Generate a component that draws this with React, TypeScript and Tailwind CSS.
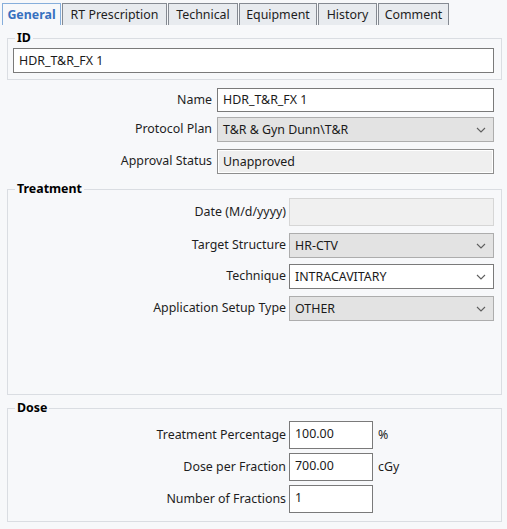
import React from "react";

const font = { fontFamily: '"Noto Sans", "Open Sans", sans-serif' };

function Chevron() {
  return (
    <svg width="10" height="6" viewBox="0 0 10 6" className="shrink-0">
      <path d="M1 1 L5 5 L9 1" fill="none" stroke="#5f5f5f" strokeWidth="1.1" />
    </svg>
  );
}

type BoxKind = "text" | "combo" | "comboWhite" | "readonly" | "date";

function Box({ kind, value, className }: { kind: BoxKind; value?: string; className: string }) {
  const base = "flex items-center pl-[5px] pr-[7px] text-[12.4px] text-[#1a1a1a] box-border ";
  const styles: Record<BoxKind, string> = {
    text: "bg-white border border-[#7a7a7a]",
    comboWhite: "bg-white border border-[#7a7a7a]",
    combo: "bg-[#e3e3e3] border border-[#adadad]",
    readonly: "bg-[#efefef] border border-[#8e8e8e] shadow-[inset_0_0_0_1px_#ffffff]",
    date: "bg-[#f0f0f0] border border-[#d6d6d6]",
  };
  return (
    <div className={base + styles[kind] + " " + className}>
      <span className="flex-1 whitespace-nowrap leading-[16px]">{value}</span>
      {(kind === "combo" || kind === "comboWhite") && <Chevron />}
    </div>
  );
}

function Tab({ label, selected, w }: { label: string; selected?: boolean; w: string }) {
  return (
    <div
      className={
        "h-[22px] flex items-center justify-center pt-[2px] text-[12.4px] border border-b-0 mr-[1px] whitespace-nowrap " +
        w +
        " " +
        (selected
          ? "bg-[#f7f8fa] border-[#86aedb] text-[#3771c0] font-bold"
          : "bg-[#e8ebef] border-[#858a92] text-[#1e1e1e]")
      }
    >
      {label}
    </div>
  );
}

export default function App() {
  return (
    <div className="w-[507px] h-[529px] bg-[#f7f8fa] overflow-hidden text-[#1e1e1e]" style={font}>
      {/* Tabs */}
      <div className="flex pt-[3px] pl-[2px] h-[25px]">
        <Tab label="General" selected w="w-[59px]" />
        <Tab label="RT Prescription" w="w-[105px]" />
        <Tab label="Technical" w="w-[70px]" />
        <Tab label="Equipment" w="w-[78px]" />
        <Tab label="History" w="w-[59px]" />
        <Tab label="Comment" w="w-[71px]" />
      </div>

      {/* ID group */}
      <fieldset className="ml-[7px] w-[495px] mt-[5px] border border-[#dadde2] pt-[2px] pb-[6px]">
        <legend className="ml-[7px] px-[2px] text-[12.4px] font-bold leading-[16px] text-black">ID</legend>
        <Box kind="text" value="HDR_T&R_FX 1" className="ml-[5px] w-[481px] h-[25px]" />
      </fieldset>

      {/* General rows */}
      <div className="flex items-center mt-[8px] h-[24px]">
        <div className="w-[213px] text-right text-[12.4px] pr-[1px] whitespace-nowrap">Name</div>
        <Box kind="text" value="HDR_T&R_FX 1" className="ml-[4px] w-[277px] h-[24px]" />
      </div>
      <div className="flex items-center mt-[5px] h-[25px]">
        <div className="w-[213px] text-right text-[12.4px] pr-[1px] whitespace-nowrap">Protocol Plan</div>
        <Box kind="combo" value="T&R & Gyn Dunn\T&R" className="ml-[4px] w-[277px] h-[25px]" />
      </div>
      <div className="flex items-center mt-[7px] h-[25px]">
        <div className="w-[213px] text-right text-[12.4px] pr-[1px] whitespace-nowrap">Approval Status</div>
        <Box kind="readonly" value="Unapproved" className="ml-[4px] w-[277px] h-[25px]" />
      </div>

      {/* Treatment group */}
      <fieldset className="ml-[7px] w-[495px] h-[214px] mt-[7px] border border-[#dadde2] pt-[1px]">
        <legend className="ml-[7px] px-[2px] text-[12.4px] font-bold leading-[16px] text-black">Treatment</legend>
        <div className="flex items-center h-[28px]">
          <div className="w-[278px] text-right text-[12.4px] whitespace-nowrap">Date (M/d/yyyy)</div>
          <Box kind="date" className="ml-[3px] w-[205px] h-[28px]" />
        </div>
        <div className="flex items-center mt-[7px] h-[25px]">
          <div className="w-[278px] text-right text-[12.4px] whitespace-nowrap">Target Structure</div>
          <Box kind="combo" value="HR-CTV" className="ml-[3px] w-[205px] h-[25px]" />
        </div>
        <div className="flex items-center mt-[6px] h-[25px]">
          <div className="w-[278px] text-right text-[12.4px] whitespace-nowrap">Technique</div>
          <Box kind="comboWhite" value="INTRACAVITARY" className="ml-[3px] w-[205px] h-[25px]" />
        </div>
        <div className="flex items-center mt-[7px] h-[25px]">
          <div className="w-[278px] text-right text-[12.4px] whitespace-nowrap">Application Setup Type</div>
          <Box kind="combo" value="OTHER" className="ml-[3px] w-[205px] h-[25px]" />
        </div>
      </fieldset>

      {/* Dose group */}
      <fieldset className="ml-[7px] w-[495px] mt-[5px] border border-[#dadde2] pt-[5px] pb-[8px]">
        <legend className="ml-[7px] px-[2px] text-[12.4px] font-bold leading-[16px] text-black">Dose</legend>
        {[
          ["Treatment Percentage", "100.00", "%"],
          ["Dose per Fraction", "700.00", "cGy"],
          ["Number of Fractions", "1", ""],
        ].map(([l, v, u], i) => (
          <div key={l} className={"flex items-center h-[28px] " + (i > 0 ? "mt-[4px]" : "")}>
            <div className="w-[278px] text-right text-[12.4px] whitespace-nowrap">{l}</div>
            <Box kind="text" value={v} className="ml-[3px] w-[84px] h-[28px] pb-[2px]" />
            <div className="ml-[5px] text-[12.4px]">{u}</div>
          </div>
        ))}
      </fieldset>
    </div>
  );
}
